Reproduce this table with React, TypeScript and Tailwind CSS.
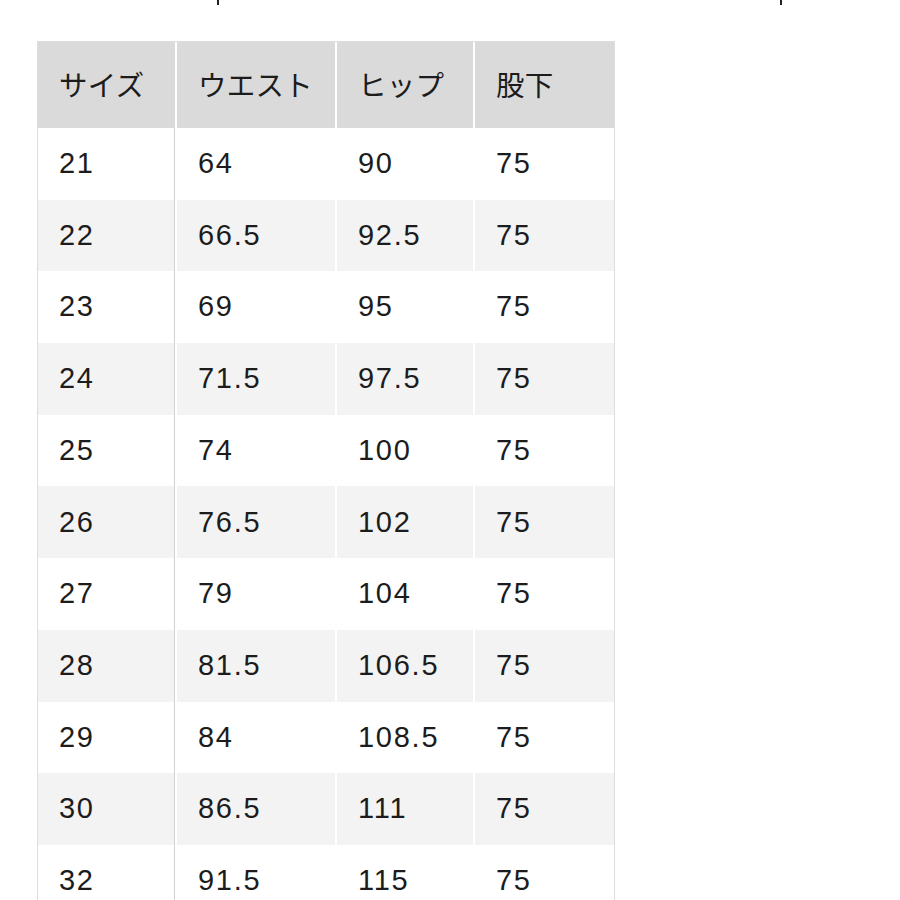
const headers = ["サイズ", "ウエスト", "ヒップ", "股下"]

const rows: string[][] = [
  ["21", "64", "90", "75"],
  ["22", "66.5", "92.5", "75"],
  ["23", "69", "95", "75"],
  ["24", "71.5", "97.5", "75"],
  ["25", "74", "100", "75"],
  ["26", "76.5", "102", "75"],
  ["27", "79", "104", "75"],
  ["28", "81.5", "106.5", "75"],
  ["29", "84", "108.5", "75"],
  ["30", "86.5", "111", "75"],
  ["32", "91.5", "115", "75"],
]

const widths = ["w-[137px]", "w-[158px]", "w-[136px]", "w-[139px]"]

export default function App() {
  return (
    <div
      className="relative h-[900px] w-[900px] overflow-hidden bg-white text-[#1c1c1c]"
      style={{ fontFamily: '"Liberation Sans", "Noto Sans CJK JP", sans-serif' }}
    >
      {/* cut-off marks from the previous section */}
      <div className="absolute left-[217px] top-0 h-[5px] w-[2px] bg-[#222]" />
      <div className="absolute left-[780px] top-0 h-[5px] w-[2px] bg-[#222]" />

      <div className="ml-[37px] mt-[41px] w-fit border-l border-r border-t border-[#dedede]">
        <div className="flex h-[86px] gap-[2px] bg-white">
          {headers.map((h, i) => (
            <div
              key={h}
              className={`${widths[i]} flex items-center bg-[#dadada] pb-[1px] pl-[21px] text-[28.5px] tracking-[0.01em]`}
              style={{ fontFamily: '"Noto Sans CJK JP", sans-serif' }}
            >
              {h}
            </div>
          ))}
        </div>

        {rows.map((r, ri) => (
          <div key={r[0]} className="flex h-[71.7px] gap-[2px] bg-white">
            {r.map((v, ci) => (
              <div
                key={ci}
                className={`${widths[ci]} flex items-center pl-[21px] text-[29px] tracking-[0.06em] ${
                  ri % 2 === 1 ? "bg-[#f3f3f3]" : "bg-white"
                } ${ci === 0 ? "border-r border-[#d2d2d2]" : ""}`}
              >
                {v}
              </div>
            ))}
          </div>
        ))}
      </div>
    </div>
  )
}
